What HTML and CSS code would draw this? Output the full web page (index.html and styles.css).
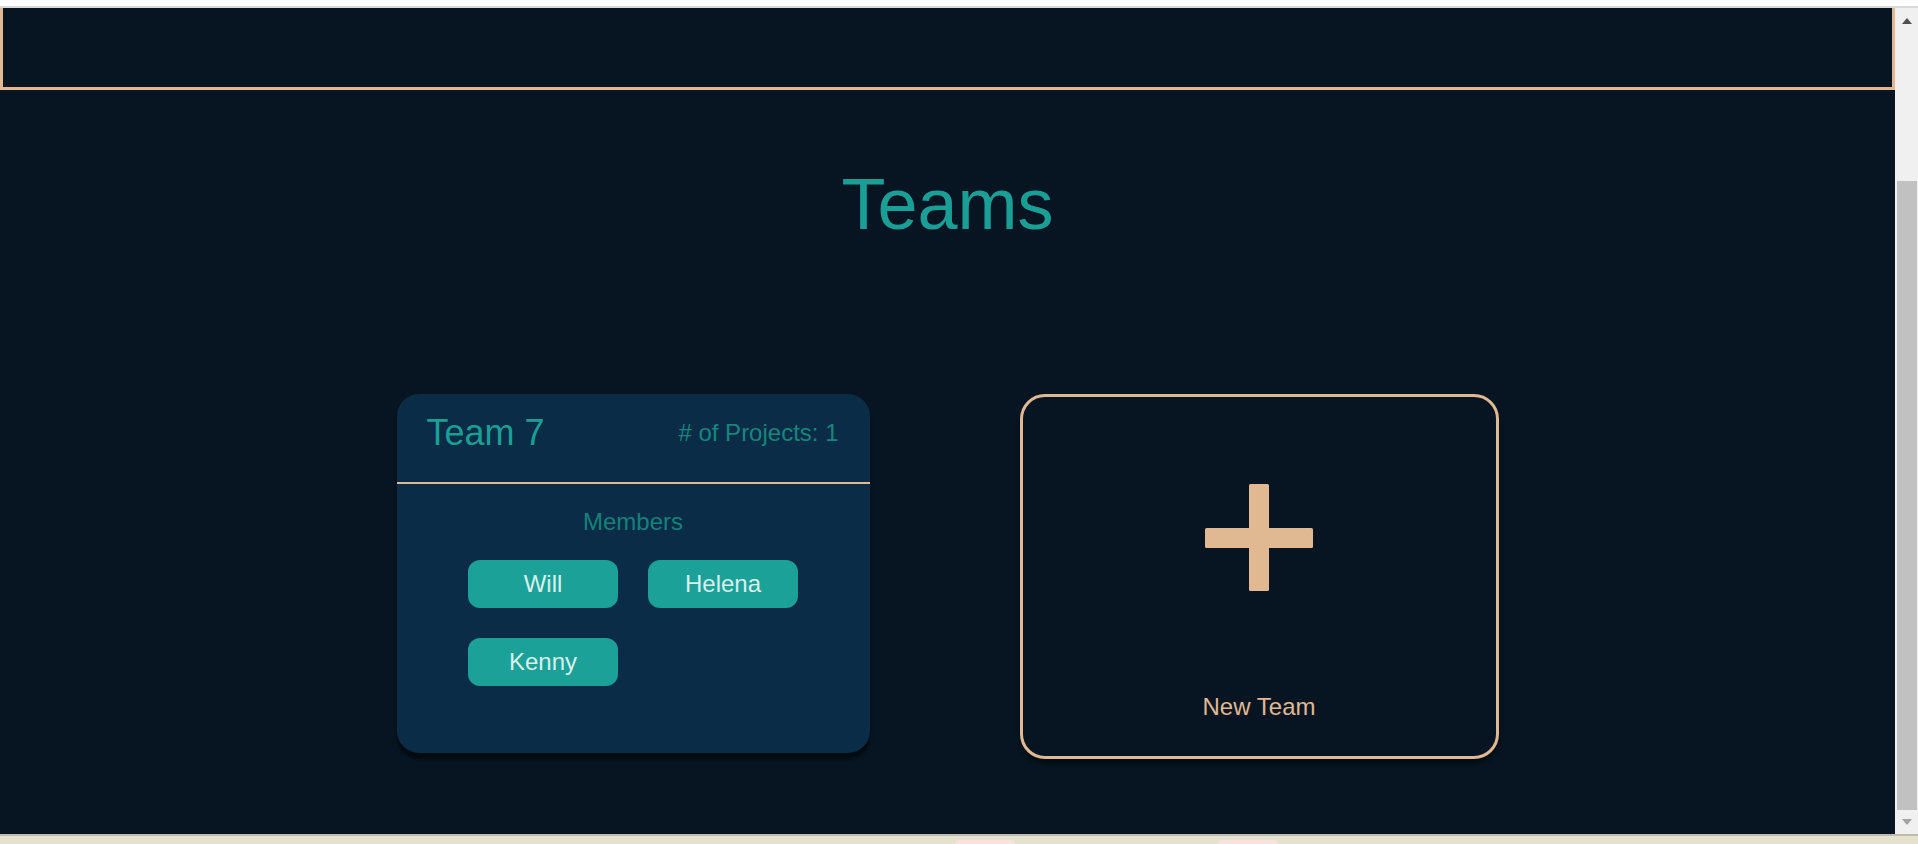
FILE: index.html
```html
<!DOCTYPE html>
<html lang="en">
<head>
<meta charset="utf-8">
<title>Teams</title>
<link rel="stylesheet" href="styles.css">
</head>
<body>
<div class="chrome-top"></div>
<div class="window">
  <main class="page">
    <header class="topbar"></header>
    <h1 class="title">Teams</h1>
    <section class="cards">
      <article class="team-card">
        <div class="card-head">
          <span class="team-name">Team 7</span>
          <span class="project-count"># of Projects: 1</span>
        </div>
        <div class="card-body">
          <div class="members-label">Members</div>
          <div class="members">
            <button class="member">Will</button>
            <button class="member">Helena</button>
            <button class="member">Kenny</button>
          </div>
        </div>
      </article>
      <article class="new-card">
        <svg class="plus" width="108" height="108" viewBox="0 0 108 108" aria-hidden="true">
          <rect x="44" y="0" width="20" height="107" rx="1.5" fill="#e0b892"/>
          <rect x="0" y="44" width="108" height="20" rx="1.5" fill="#e0b892"/>
        </svg>
        <div class="new-label">New Team</div>
      </article>
    </section>
  </main>
  <div class="scrollbar">
    <span class="sb-up"></span>
    <span class="sb-thumb"></span>
    <span class="sb-down"></span>
  </div>
</div>
<div class="chrome-bottom">
  <span class="pill"></span>
  <span class="pill pill-2"></span>
</div>
</body>
</html>
```

FILE: styles.css
```css
* { box-sizing: content-box; }

html, body {
  margin: 0;
  padding: 0;
  width: 1918px;
  height: 844px;
  overflow: hidden;
  background: #ffffff;
  font-family: "Liberation Sans", Arial, sans-serif;
}

.chrome-top {
  height: 6px;
  background: #ffffff;
  border-bottom: 2px solid #dadcda;
}

.window {
  display: flex;
  height: 826px;
}

.page {
  flex: 1;
  background: #061521;
  overflow: hidden;
}

.topbar {
  height: 79px;
  border: 3px solid #e0b892;
  border-top: none;
  background: #061521;
}

.title {
  margin: 0;
  padding-top: 78px;
  text-align: center;
  font-size: 72px;
  line-height: 72px;
  font-weight: normal;
  color: #1a9f97;
}

.cards {
  display: flex;
  justify-content: center;
  align-items: flex-start;
  gap: 150px;
  margin-top: 154px;
}

.team-card {
  width: 473px;
  height: 359px;
  background: #0b2c46;
  border-radius: 22px;
  box-shadow: 0 6px 3px rgba(0, 0, 0, 0.5);
  overflow: hidden;
}

.card-head {
  display: flex;
  justify-content: space-between;
  align-items: center;
  height: 77px;
  padding: 0 31px 11px 30px;
  border-bottom: 2px solid #e0b892;
}

.team-name {
  font-size: 36px;
  color: #1a9f97;
}

.project-count {
  font-size: 24px;
  color: #17857f;
}

.card-body {
  padding-top: 24px;
}

.members-label {
  text-align: center;
  font-size: 24px;
  color: #15807c;
}

.members {
  display: grid;
  grid-template-columns: 150px 150px;
  grid-auto-rows: 48px;
  gap: 30px;
  justify-content: center;
  margin-top: 24px;
}

.member {
  border: none;
  margin: 0;
  padding: 0;
  border-radius: 12px;
  background: #1ba197;
  color: #d9efed;
  font-family: "Liberation Sans", Arial, sans-serif;
  font-size: 24px;
}

.new-card {
  width: 473px;
  height: 359px;
  border: 3px solid #e0b892;
  border-radius: 25px;
  background: #061521;
  box-shadow: 0 5px 4px rgba(0, 0, 0, 0.4);
  display: flex;
  flex-direction: column;
  align-items: center;
}

.plus {
  display: block;
  margin-top: 87px;
}

.new-label {
  margin-top: 101px;
  font-size: 24px;
  color: #e0b892;
}

.scrollbar {
  width: 23px;
  background: #f0f0f0;
  display: flex;
  flex-direction: column;
  align-items: center;
}

.sb-up {
  margin-top: 10px;
  width: 0;
  height: 0;
  border-left: 5px solid transparent;
  border-right: 5px solid transparent;
  border-bottom: 6px solid #505050;
}

.sb-thumb {
  margin-top: 157px;
  margin-left: 1px;
  width: 20px;
  height: 629px;
  background: #c1c1c1;
}

.sb-down {
  margin-top: 9px;
  width: 0;
  height: 0;
  border-left: 5px solid transparent;
  border-right: 5px solid transparent;
  border-top: 6px solid #a3a3a3;
}

.chrome-bottom {
  height: 4px;
  padding-top: 4px;
  border-top: 2px solid #bdbcae;
  background: #e4e2cd;
  display: flex;
}

.pill {
  display: block;
  width: 60px;
  height: 4px;
  margin-left: 955px;
  border-radius: 8px 8px 0 0;
  background: #fbe0e0;
}

.pill-2 {
  margin-left: 203px;
}
```
